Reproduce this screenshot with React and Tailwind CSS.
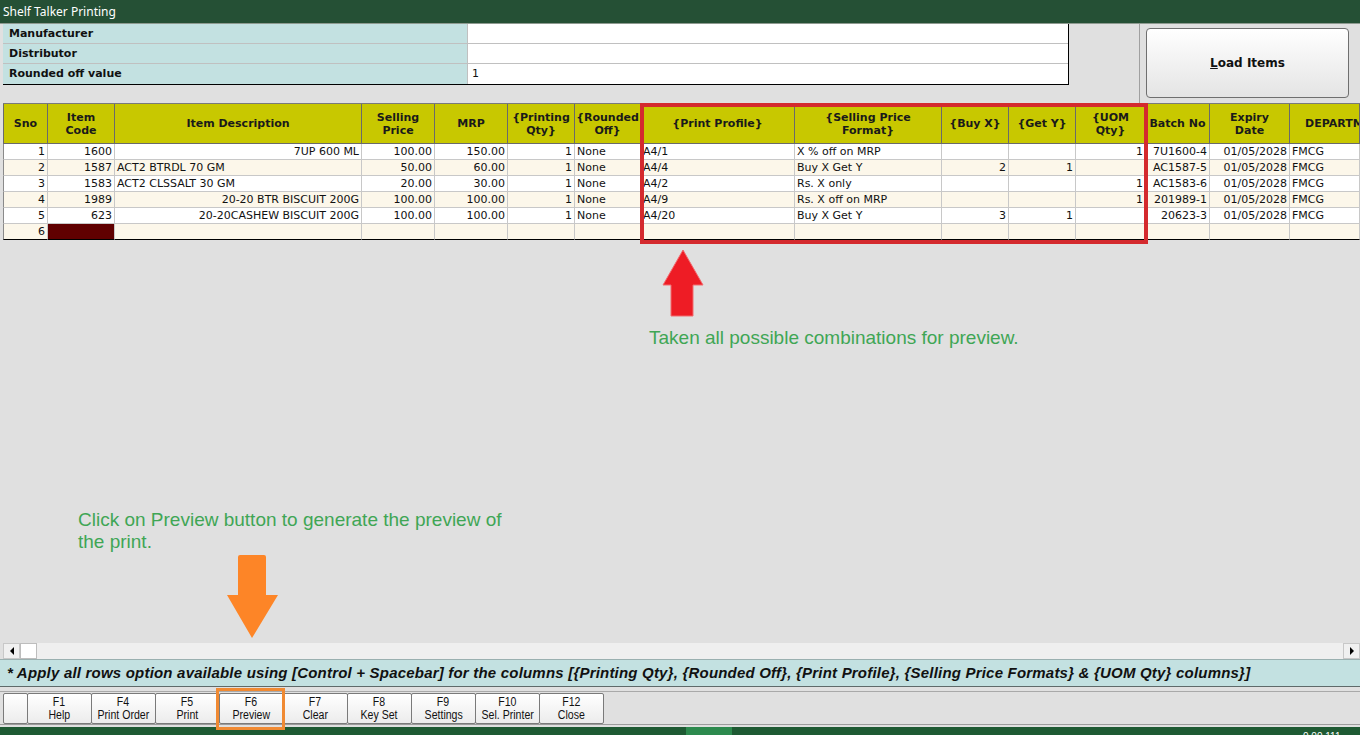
import React from "react";

const cols = [
  { w: 45, h: ["Sno"], a: "r" },
  { w: 67, h: ["Item", "Code"], a: "r" },
  { w: 247, h: ["Item Description"], a: "l" },
  { w: 73, h: ["Selling", "Price"], a: "r" },
  { w: 73, h: ["MRP"], a: "r" },
  { w: 67, h: ["{Printing", "Qty}"], a: "r" },
  { w: 66, h: ["{Rounded", "Off}"], a: "l" },
  { w: 154, h: ["{Print Profile}"], a: "l" },
  { w: 147, h: ["{Selling Price", "Format}"], a: "l" },
  { w: 67, h: ["{Buy X}"], a: "r" },
  { w: 67, h: ["{Get Y}"], a: "r" },
  { w: 70, h: ["{UOM", "Qty}"], a: "r" },
  { w: 64, h: ["Batch No"], a: "r" },
  { w: 80, h: ["Expiry", "Date"], a: "r" },
  { w: 70, h: ["DEPARTMENT"], a: "l" },
];

const rows = [
  { d: ["1", "1600", "7UP 600 ML", "100.00", "150.00", "1", "None", "A4/1", "X % off on MRP", "", "", "1", "7U1600-4", "01/05/2028", "FMCG"], descRight: true },
  { d: ["2", "1587", "ACT2 BTRDL 70 GM", "50.00", "60.00", "1", "None", "A4/4", "Buy X Get Y", "2", "1", "", "AC1587-5", "01/05/2028", "FMCG"], descRight: false },
  { d: ["3", "1583", "ACT2 CLSSALT 30 GM", "20.00", "30.00", "1", "None", "A4/2", "Rs. X only", "", "", "1", "AC1583-6", "01/05/2028", "FMCG"], descRight: false },
  { d: ["4", "1989", "20-20 BTR BISCUIT 200G", "100.00", "100.00", "1", "None", "A4/9", "Rs. X off on MRP", "", "", "1", "201989-1", "01/05/2028", "FMCG"], descRight: true },
  { d: ["5", "623", "20-20CASHEW BISCUIT 200G", "100.00", "100.00", "1", "None", "A4/20", "Buy X Get Y", "3", "1", "", "20623-3", "01/05/2028", "FMCG"], descRight: true },
  { d: ["6", "", "", "", "", "", "", "", "", "", "", "", "", "", ""], descRight: false, last: true },
];

const gridCols =
  "grid grid-cols-[45px_67px_247px_73px_73px_67px_66px_154px_147px_67px_67px_70px_64px_80px_70px]";

const buttons = [
  ["F1", "Help"],
  ["F4", "Print Order"],
  ["F5", "Print"],
  ["F6", "Preview"],
  ["F7", "Clear"],
  ["F8", "Key Set"],
  ["F9", "Settings"],
  ["F10", "Sel. Printer"],
  ["F12", "Close"],
];

export default function App() {
  return (
    <div className="relative w-[1369px] h-[735px] bg-white overflow-hidden font-['DejaVu_Sans',sans-serif] text-[#111]">
      <div className="w-[1360px] h-[735px] flex flex-col bg-[#e0e0e0]">
        {/* Title bar */}
        <div className="h-[23px] bg-[#255035] text-white text-[12px] leading-[23px] pl-[3px] font-['Noto_Sans',sans-serif]">
          Shelf Talker Printing
        </div>
        <div className="h-px bg-[#8e9a90]" />

        {/* Top panel */}
        <div className="h-[79px] flex">
          <div className="w-[3px]" />
          <div className="w-[1066px] h-[61px] flex flex-col border-r border-b border-black">
            {["Manufacturer", "Distributor", "Rounded off value"].map((l, i) => (
              <div key={l} className={`flex h-[20px] ${i < 2 ? "border-b border-[#c0c0c0]" : ""}`}>
                <div className="w-[465px] bg-[#c3e1e1] border-r border-[#c0c0c0] pl-[6px] text-[11px] font-bold leading-[19px]">
                  {l}
                </div>
                <div className="flex-1 bg-white pl-[4px] text-[11px] leading-[20px]">{i === 2 ? "1" : ""}</div>
              </div>
            ))}
          </div>
          <div className="w-[71px] border-r border-[#a0a0a0]" />
          <div className="pl-[6px] pt-[4px]">
            <button className="w-[203px] h-[70px] rounded-[4px] border border-[#6f6f6f] bg-gradient-to-b from-white to-[#e4e4e4] text-[12px] font-bold text-[#111]">
              <span className="underline">L</span>oad Items
            </button>
          </div>
        </div>

        {/* Grid */}
        <div className="pl-[3px]">
          <div className={`${gridCols} border-t border-[#7a7a7a] bg-[#c8c800]`}>
            {cols.map((c, i) => (
              <div
                key={i}
                className={`h-[40px] border-r border-b border-[#6a6a6a] ${i === 0 ? "border-l" : ""} flex flex-col justify-center text-[11px] font-bold leading-[13px] overflow-hidden whitespace-nowrap text-[#1a1a1a] ${i === 14 ? "items-start pl-[15px]" : "items-center"}`}
              >
                {c.h.map((t) => (
                  <div key={t}>{t}</div>
                ))}
              </div>
            ))}
          </div>
          {rows.map((r, ri) => (
            <div key={ri} className={`${gridCols} ${ri % 2 === 1 ? "bg-[#fcf7ea]" : "bg-white"}`}>
              {r.d.map((v, ci) => {
                let right = cols[ci].a === "r";
                if (ci === 2) right = r.descRight;
                const maroon = r.last && ci === 1;
                return (
                  <div
                    key={ci}
                    className={`h-[16px] border-r border-[#c8c8c8] ${ri === 5 ? "border-b border-b-black" : "border-b"} ${ci === 0 ? "border-l border-l-[#8a8a8a]" : ""} flex items-center overflow-hidden whitespace-nowrap text-[11px] leading-[15px] ${right ? "justify-end pr-[2px]" : "justify-start pl-[2px]"} ${maroon ? "bg-[#600000]" : ""}`}
                  >
                    {v}
                  </div>
                );
              })}
            </div>
          ))}
        </div>

        {/* empty area */}
        <div className="flex-1" />

        {/* Horizontal scrollbar */}
        <div className="h-[16px] flex pl-[3px]">
          <div className="w-[17px] h-[16px] bg-[#f0f0f0] border border-[#c8c8c8] flex items-center justify-center">
            <div className="w-0 h-0 border-y-[4px] border-y-transparent border-r-[4px] border-r-black" />
          </div>
          <div className="w-[17px] h-[16px] bg-white border border-[#bdbdbd]" />
          <div className="flex-1 h-[16px] bg-[#efefef] bg-[radial-gradient(#dadada_0.6px,transparent_0.6px)] bg-[length:2px_2px]" />
          <div className="w-[17px] h-[16px] bg-[#f0f0f0] border border-[#c8c8c8] flex items-center justify-center">
            <div className="w-0 h-0 border-y-[4px] border-y-transparent border-l-[4px] border-l-black" />
          </div>
        </div>

        {/* Info bar */}
        <div className="h-[28px] bg-[#c3e1e1] border-t border-[#9ab0b0] border-b border-b-[#5f6a6a] pl-[7px] text-[15px] tracking-[0.2px] leading-[25px] font-bold italic font-['Liberation_Sans',sans-serif] whitespace-nowrap overflow-hidden text-[#111]">
          * Apply all rows option available using [Control + Spacebar] for the columns [{"{"}Printing Qty{"}"}, {"{"}Rounded Off{"}"}, {"{"}Print Profile{"}"}, {"{"}Selling Price Formats{"}"} &amp; {"{"}UOM Qty{"}"} columns{"}"}]
        </div>
        <div className="h-[4px]" />

        {/* Toolbar */}
        <div className="h-[34px] border-t border-[#a9a9a9] border-b border-b-[#9c9c9c] flex pl-[3px] pt-[1px]">
          <div className="w-[25px] h-[31px] border border-[#7a7a7a] rounded-[2px] bg-gradient-to-b from-white to-[#ececec]" />
          {buttons.map(([k, l]) => (
            <div
              key={k}
              className="w-[65px] h-[31px] -ml-px border border-[#7a7a7a] rounded-[2px] bg-gradient-to-b from-white to-[#ececec] flex flex-col items-center justify-center text-[12px] leading-[13px] font-['Liberation_Sans',sans-serif] text-[#111]"
            >
              <div className="scale-x-[0.88] whitespace-nowrap">{k}</div>
              <div className="scale-x-[0.88] whitespace-nowrap">{l}</div>
            </div>
          ))}
        </div>
        <div className="h-[2px]" />

        {/* Status bar */}
        <div className="h-[8px] bg-[#1e5a33] flex overflow-hidden relative">
          <div className="ml-[686px] w-[46px] h-[8px] bg-[#2d8a4e]" />
          <div className="absolute left-[1303px] top-[5px] text-[10px] leading-[10px] text-white font-['Liberation_Sans',sans-serif]">0.00.111</div>
        </div>
      </div>

      {/* Annotations */}
      <div className="absolute left-[640px] top-[103px] w-[508px] h-[141px] border-[4px] border-[#d42a2e]" />
      <svg className="absolute left-[662px] top-[249px]" width="42" height="69" viewBox="0 0 42 69">
        <polygon points="21,1 41,36 31,36 31,67 9,67 9,36 1,36" fill="#ee1c25" stroke="#f26a6e" strokeWidth="1" strokeLinejoin="round" />
      </svg>
      <div className="absolute left-[649px] top-[327px] text-[19px] leading-[22px] text-[#3fa655] font-['Liberation_Sans',sans-serif] whitespace-nowrap">
        Taken all possible combinations for preview.
      </div>
      <div className="absolute left-[78px] top-[509px] w-[440px] text-[19px] leading-[22px] text-[#3fa655] font-['Liberation_Sans',sans-serif]">
        Click on Preview button to generate the preview of the print.
      </div>
      <svg className="absolute left-[226px] top-[554px]" width="53" height="85" viewBox="0 0 53 85">
        <path d="M14,1 L38,1 Q40,1 40,3 L40,41 L52,41 L26,84 L1,41 L12,41 L12,3 Q12,1 14,1 Z" fill="#fd8527" />
      </svg>
      <div className="absolute left-[216px] top-[688px] w-[69px] h-[42px] border-[3px] border-[#f08a33]" />
    </div>
  );
}
